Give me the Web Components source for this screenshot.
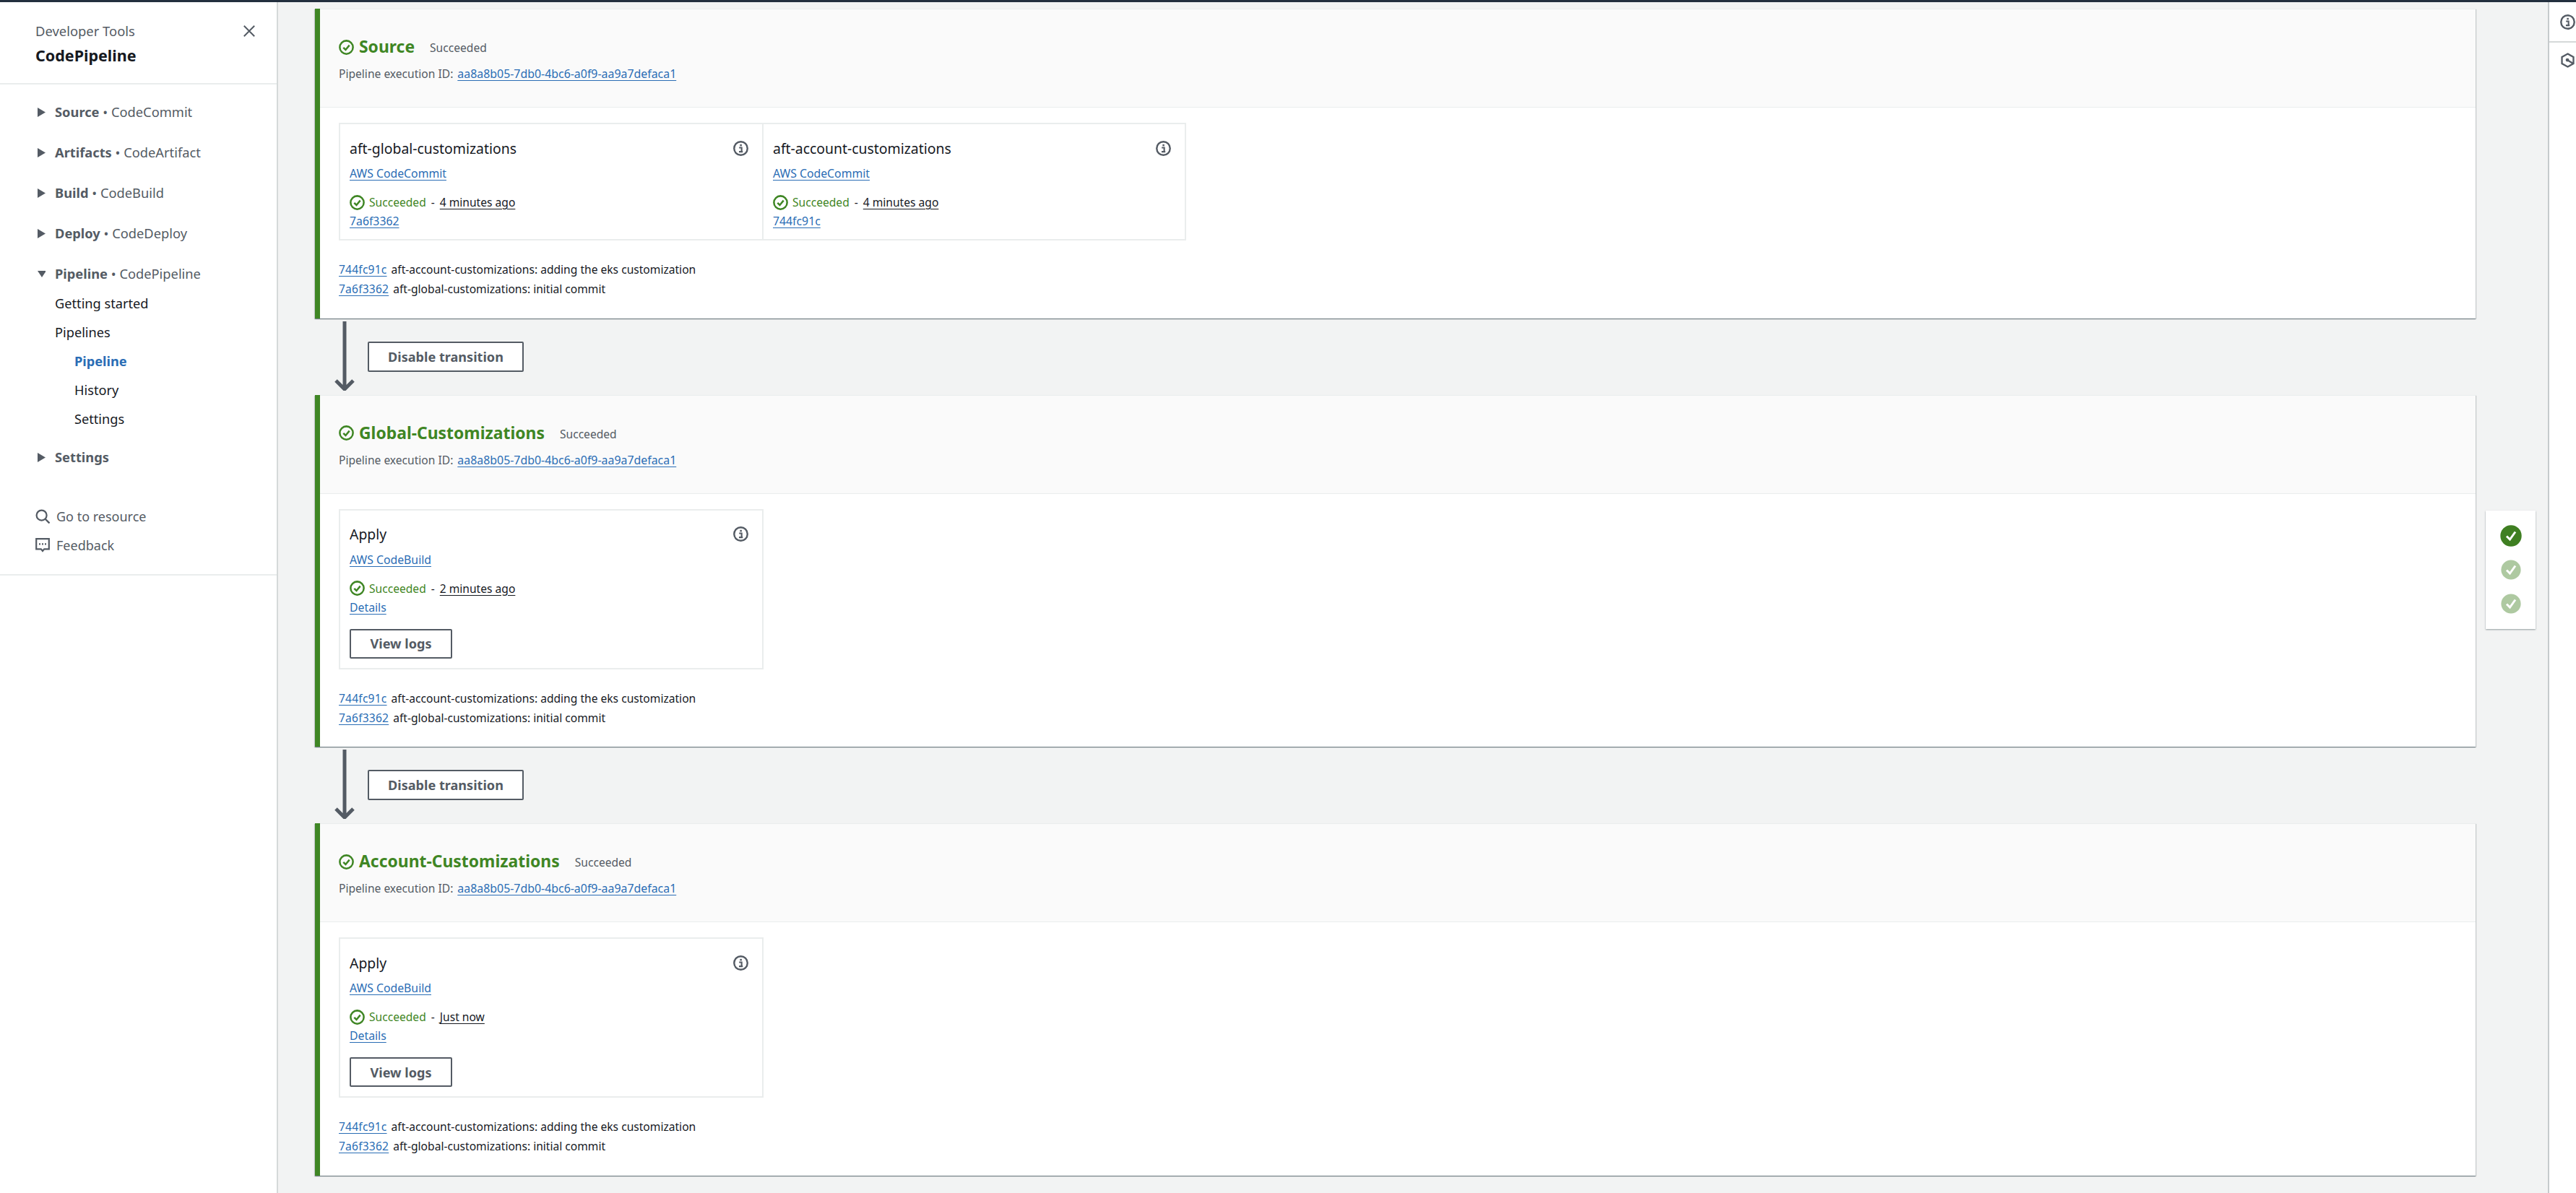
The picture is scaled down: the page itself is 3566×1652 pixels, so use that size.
<!DOCTYPE html>
<html lang="en"><head><meta charset="utf-8"><title>CodePipeline</title>
<style>
html,body{margin:0;padding:0;background:#f2f3f3;height:100%;overflow:hidden}
body{font-family:"Noto Sans","Liberation Sans",sans-serif;color:#16191f}
</style></head>
<body>
<app-shell>
  <side-nav slot="nav"></side-nav>
  <stage-card name="Source" slot="main" sourcecards></stage-card>
  <stage-transition slot="main"></stage-transition>
  <stage-card name="Global-Customizations" ago="2 minutes ago" slot="main"></stage-card>
  <stage-transition slot="main"></stage-transition>
  <stage-card name="Account-Customizations" ago="Just now" slot="main"></stage-card>
  <status-rail slot="float"></status-rail>
  <tools-rail slot="tools"></tools-rail>
</app-shell>
<script>
const ICONS={
 ok:'<circle cx="10" cy="10" r="8.7" fill="none" stroke="currentColor" stroke-width="2.4"/><path d="M6 10.3l3 3 5-6" fill="none" stroke="currentColor" stroke-width="2.4"/>',
 info:'<circle cx="10" cy="10" r="8.8" fill="none" stroke="currentColor" stroke-width="2.3"/><rect x="8.9" y="4.6" width="2.4" height="2.4" fill="currentColor"/><path d="M7.8 9h3.3v5M7.6 14.4h5" fill="none" stroke="currentColor" stroke-width="2"/>',
 close:'<path d="M2 2l16 16M18 2L2 18" fill="none" stroke="currentColor" stroke-width="2.2"/>',
 search:'<circle cx="8.6" cy="8.6" r="7" fill="none" stroke="currentColor" stroke-width="2.2"/><path d="M13.5 13.5l6 6" fill="none" stroke="currentColor" stroke-width="2.4"/>',
 chat:'<path d="M1.2 1.2h17.6v14.2h-6.6L10 18l-2.2-2.6H1.2z" fill="none" stroke="currentColor" stroke-width="2.2"/><path d="M5 7.2h2v2.2H5zM9 7.2h2v2.2H9zM13 7.2h2v2.2h-2z" fill="currentColor"/>',
 hex:'<path d="M10 1.4l7.6 4.3v8.6L10 18.6l-7.6-4.3V5.7z" fill="none" stroke="currentColor" stroke-width="2.2"/><circle cx="9.6" cy="9.6" r="2.3" fill="currentColor"/><path d="M10 10l7 4" fill="none" stroke="currentColor" stroke-width="2.2"/>'
};
class Base extends HTMLElement{
  render(html){ if(!this.shadowRoot) this.attachShadow({mode:'open'}); this.shadowRoot.innerHTML=html; }
}
class UiIcon extends Base{
  connectedCallback(){
    const s=this.getAttribute('size')||20;
    this.render(`<style>:host{display:inline-flex;flex:none;width:${s}px;height:${s}px;color:${this.getAttribute('color')||'inherit'}}svg{display:block;width:100%;height:100%}</style><svg viewBox="0 0 20 20" aria-hidden="true">${ICONS[this.getAttribute('name')]||''}</svg>`);
  }
}
customElements.define('ui-icon',UiIcon);

class AppShell extends Base{
  connectedCallback(){
    this.render(`<style>
      :host{display:block;height:1652px;overflow:hidden;background:#f2f3f3}
      .top{height:3px;background:#232f3e}
      .grid{display:grid;grid-template-columns:385px 1fr 39px;height:1649px}
      main{position:relative;padding:9px 100px 0 51px;min-width:0}
    </style>
    <div class="top"></div>
    <div class="grid"><slot name="nav"></slot><main><slot name="main"></slot><slot name="float"></slot></main><slot name="tools"></slot></div>`);
  }
}
customElements.define('app-shell',AppShell);

class NavGroup extends Base{
  connectedCallback(){
    const open=this.hasAttribute('open');
    this.render(`<style>
      :host{display:block;font-size:18.3px;color:#545b64}
      .row{display:flex;align-items:center;height:28px;padding-left:52px}
      svg{width:11px;height:13px;flex:none;margin-right:13px;margin-top:3px;fill:currentColor}
      b{font-weight:700}
    </style>
    <div class="row"><svg viewBox="0 0 11 13">${open?'<path d="M0 2h12L6 11z"/>':'<path d="M0 0l11 6.5L0 13z"/>'}</svg><span><b>${this.getAttribute('head')}</b>${this.getAttribute('svc')?' • '+this.getAttribute('svc'):''}</span></div>
    <slot></slot>`);
  }
}
customElements.define('nav-group',NavGroup);

class NavLink extends Base{
  connectedCallback(){
    const sub=this.hasAttribute('sub'),act=this.hasAttribute('active');
    this.render(`<style>
      :host{display:block;height:40px;line-height:40px;font-size:18.2px;padding-left:${sub?103:76}px;color:${act?'#2a6db5':'#16191f'};font-weight:${act?700:400}}
    </style><slot></slot>`);
  }
}
customElements.define('nav-link',NavLink);

class SideNav extends Base{
  connectedCallback(){
    this.render(`<style>
      :host{display:block;background:#fff;border-right:2px solid #d5d9d9;height:100%;box-sizing:border-box;width:385px}
      header{position:relative;height:114px;box-sizing:border-box;padding:27px 0 0 49px;border-bottom:2px solid #eaeded}
      .t1{font-size:18.4px;line-height:26px;color:#545b64}
      .t2{font-size:21.5px;line-height:34px;font-weight:700;color:#16191f;margin-top:4px}
      ui-icon{position:absolute;left:336px;top:31px;color:#545b64}
      .tree{padding-top:23px;display:flex;flex-direction:column;gap:28px}
      .kids{margin-top:8px;margin-bottom:-10px}
      .links{margin-top:49px;padding:0 0 20px 49px;border-bottom:2px solid #eaeded;font-size:18px;color:#545b64}
      .lk{display:flex;align-items:center;height:40px;gap:9px}
      .lk ui-icon{position:static}
    </style>
    <header><div class="t1">Developer Tools</div><div class="t2">CodePipeline</div><ui-icon name="close" size="18"></ui-icon></header>
    <div class="tree">
      <nav-group head="Source" svc="CodeCommit"></nav-group>
      <nav-group head="Artifacts" svc="CodeArtifact"></nav-group>
      <nav-group head="Build" svc="CodeBuild"></nav-group>
      <nav-group head="Deploy" svc="CodeDeploy"></nav-group>
      <nav-group head="Pipeline" svc="CodePipeline" open>
        <div class="kids">
          <nav-link>Getting started</nav-link>
          <nav-link>Pipelines</nav-link>
          <nav-link sub active>Pipeline</nav-link>
          <nav-link sub>History</nav-link>
          <nav-link sub>Settings</nav-link>
        </div>
      </nav-group>
      <nav-group head="Settings"></nav-group>
    </div>
    <div class="links">
      <div class="lk"><ui-icon name="search" size="20"></ui-icon>Go to resource</div>
      <div class="lk"><ui-icon name="chat" size="20"></ui-icon>Feedback</div>
    </div>`);
  }
}
customElements.define('side-nav',SideNav);

const LINK='a{color:#2a6db5;text-decoration:underline;text-underline-offset:3px}';

class ActionCard extends Base{
  connectedCallback(){
    const g=a=>this.getAttribute(a);
    const logs=this.hasAttribute('logs');
    this.render(`<style>${LINK}
      :host{display:block;width:${g('w')||588}px;box-sizing:border-box;border:2px solid #eaeded;padding:19px 13px 13px;margin-left:${g('ml')||0}}
      .h{display:flex;justify-content:space-between;align-items:center;height:28px;font-size:19.4px;color:#16191f}
      .h ui-icon{margin-right:6px;color:#545b64}
      .r{line-height:24px;font-size:15.8px}
      .svc{margin-top:9px}
      .st{margin-top:16px;display:flex;align-items:center;gap:6px;height:24px;font-size:15.6px}
      .st ui-icon{color:#3f8624}
      .ok{color:#3f8624}
      .ago{color:#16191f;text-decoration:underline;text-underline-offset:3px}
      .d{margin:0 1px}
      .l{margin-top:2px}
      .btn{margin-top:18px}
    </style>
    <div class="h"><span>${g('title')}</span><ui-icon name="info" size="21"></ui-icon></div>
    <div class="r svc"><a href="#">${g('svc')}</a></div>
    <div class="st"><ui-icon name="ok" size="21"></ui-icon><span class="ok">Succeeded</span><span class="d">-</span><span class="ago">${g('ago')}</span></div>
    <div class="r l"><a href="#">${g('link')}</a></div>
    ${logs?'<ui-button class="btn" w="142" h="41">View logs</ui-button>':''}`);
  }
}
customElements.define('action-card',ActionCard);

class UiButton extends Base{
  connectedCallback(){
    const g=a=>this.getAttribute(a);
    this.render(`<style>
      :host{display:flex;align-items:center;justify-content:center;width:${g('w')}px;height:${g('h')}px;box-sizing:border-box;background:#fff;border:2px solid #545b64;border-radius:2px;color:#545b64;font-weight:700;font-size:18.1px;flex:none}
    </style><slot></slot>`);
  }
}
customElements.define('ui-button',UiButton);

class CommitList extends Base{
  connectedCallback(){
    this.render(`<style>${LINK}
      :host{display:block;margin-top:27px;font-size:15.6px;line-height:27px;color:#16191f}
      a{margin-right:6px;letter-spacing:.2px}
      div{height:27px}
    </style>
    <div><a href="#">744fc91c</a>aft-account-customizations: adding the eks customization</div>
    <div><a href="#">7a6f3362</a>aft-global-customizations: initial commit</div>`);
  }
}
customElements.define('commit-list',CommitList);

class StageCard extends Base{
  connectedCallback(){
    const name=this.getAttribute('name'),ago=this.getAttribute('ago');
    const src=this.hasAttribute('sourcecards');
    const cards=src
      ?`<div class="cards"><action-card title="aft-global-customizations" svc="AWS CodeCommit" ago="4 minutes ago" link="7a6f3362" w="588"></action-card><action-card title="aft-account-customizations" svc="AWS CodeCommit" ago="4 minutes ago" link="744fc91c" w="587" ml="-2px"></action-card></div>`
      :`<div class="cards"><action-card title="Apply" svc="AWS CodeBuild" ago="${ago}" link="Details" logs></action-card></div>`;
    this.render(`<style>${LINK}
      :host{display:block;background:#fff;border-left:7px solid #3f8624;box-shadow:0 1px 1px 0 rgba(0,28,36,.35),1px 1px 1px 0 rgba(0,28,36,.15),-1px 1px 1px 0 rgba(0,28,36,.15)}
      header{background:#fafafa;border-bottom:1px solid #eaeded;border-top:1px solid #eaeded;padding:37px 26px 33px;color:#545b64}
      .title{display:flex;align-items:center;height:30px;gap:7px;color:#3f8624}
      h2{margin:0;font-size:22.9px;font-weight:700;line-height:30px}
      .s{font-size:15.6px;color:#545b64;margin-left:14px;margin-top:2px}
      .id{margin-top:9px;line-height:26px;font-size:15.6px}
      .id a{margin-left:6px;font-size:15.9px}
      .body{padding:21px 26px 26.5px}
      .cards{display:flex}
    </style>
    <header>
      <div class="title"><ui-icon name="ok" size="21"></ui-icon><h2>${name}</h2><span class="s">Succeeded</span></div>
      <div class="id">Pipeline execution ID:<a href="#">aa8a8b05-7db0-4bc6-a0f9-aa9a7defaca1</a></div>
    </header>
    <div class="body">${cards}<commit-list></commit-list></div>`);
  }
}
customElements.define('stage-card',StageCard);

class StageTransition extends Base{
  connectedCallback(){
    this.render(`<style>
      :host{display:flex;height:106px;padding-left:27px;gap:18px;align-items:flex-start}
      svg{width:28px;height:96px;margin-top:4px;flex:none;color:#545b64}
      ui-button{margin-top:32px}
    </style>
    <svg viewBox="0 0 28 96"><path d="M14 0v93M2 82l12 12 12-12" fill="none" stroke="currentColor" stroke-width="5"/></svg>
    <ui-button w="216" h="42">Disable transition</ui-button>`);
  }
}
customElements.define('stage-transition',StageTransition);

class StatusRail extends Base{
  connectedCallback(){
    const dot=(r,op)=>`<svg viewBox="0 0 30 30" style="opacity:${op}"><circle cx="15" cy="15" r="${r}" fill="#3f7f22"/><path d="M9 15.5l4.5 4.5L21 9.5" fill="none" stroke="#fff" stroke-width="3"/></svg>`;
    this.render(`<style>
      :host{position:absolute;left:3056px;top:704px;width:69px;height:164px;box-sizing:border-box;background:#fff;padding:20px 0;display:flex;flex-direction:column;align-items:center;gap:17px;box-shadow:0 1px 2px rgba(0,28,36,.4)}
      svg{width:30px;height:30px;display:block}
    </style>${dot(14.7,1)}${dot(13.6,.42)}${dot(13.6,.42)}`);
  }
}
customElements.define('status-rail',StatusRail);

class ToolsRail extends Base{
  connectedCallback(){
    this.render(`<style>
      :host{display:block;background:#fff;border-left:2px solid #c6cacc;box-sizing:border-box;height:100%;color:#545b64}
      .b{display:flex;justify-content:center;height:54px;align-items:center;padding-left:14px;box-sizing:border-box;overflow:hidden}
      .b+.b{border-top:2px solid #d5d9d9;height:50px}
    </style>
    <div class="b"><ui-icon name="info" size="21"></ui-icon></div>
    <div class="b"><ui-icon name="hex" size="21"></ui-icon></div>`);
  }
}
customElements.define('tools-rail',ToolsRail);
</script>
</body></html>
